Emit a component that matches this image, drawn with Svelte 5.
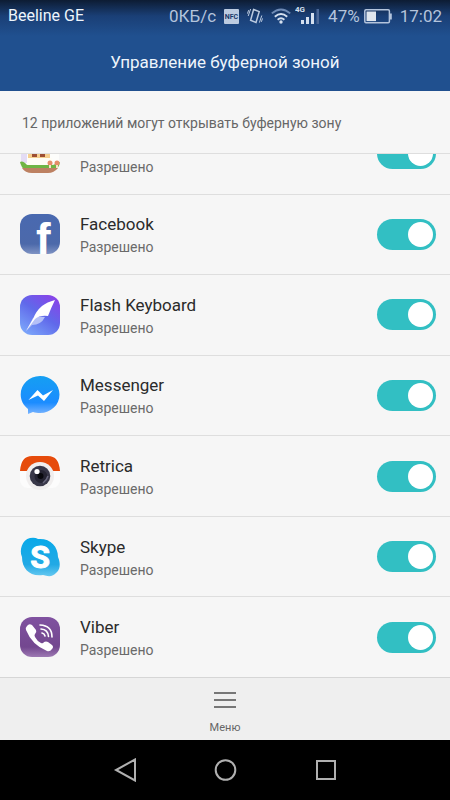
<script>
  let apps = $state([
    { id: 'farm', name: '', allowed: true },
    { id: 'facebook', name: 'Facebook', allowed: true },
    { id: 'flash', name: 'Flash Keyboard', allowed: true },
    { id: 'messenger', name: 'Messenger', allowed: true },
    { id: 'retrica', name: 'Retrica', allowed: true },
    { id: 'skype', name: 'Skype', allowed: true },
    { id: 'viber', name: 'Viber', allowed: true }
  ]);
</script>

<div class="screen">
  <header>
    <div class="status">
      <span class="carrier">Beeline GE</span>
      <span class="speed">0КБ/с</span>
      <svg class="nfc" width="15" height="15" viewBox="0 0 15 15">
        <rect width="15" height="15" rx="1" fill="#bccbe0" />
        <text x="7.5" y="10" text-anchor="middle" font-size="7" font-weight="700" fill="#1b3a6b">NFC</text>
      </svg>
      <svg class="vibrate" width="16" height="16" viewBox="0 0 16 16" fill="none" stroke="#bccbe0">
        <path d="M6.6 1.5 12.2 3.6 9 14.5 3.6 12.3Z" stroke-width="1.5" />
        <path d="M3.6 1 1.2 8M1.6 2.2.5 5.6M14.8 7.5 12.4 14.6M15.5 10.4 14.4 13.8" stroke-width="1" />
      </svg>
      <svg class="wifi" width="20" height="16" viewBox="0 0 20 16" fill="none" stroke-width="1.9">
        <path d="M.8 5.4Q10-2.6 19.2 5.4" stroke="#6f8bb5" />
        <path d="M3.8 8.7Q10 3.4 16.2 8.7" stroke="#d5e0ef" />
        <path d="M6.6 11.7Q10 9 13.4 11.7" stroke="#d5e0ef" />
        <circle cx="10" cy="14" r="1.7" fill="#d5e0ef" />
      </svg>
      <svg class="signal" width="25" height="19" viewBox="0 0 25 19" fill="#d5e0ef">
        <text x="0" y="7" font-size="8" font-weight="700">4G</text>
        <path d="M6 15h3v4H6zM11 12h3v7h-3zM16 8h3v11h-3z" />
        <path d="M21.5 4H24v15h-2.5z" fill="#4a6797" />
      </svg>
      <span class="percent">47%</span>
      <svg class="battery" width="28" height="15" viewBox="0 0 28 15">
        <rect x=".8" y=".8" width="24.6" height="13" rx="1.2" fill="none" stroke="#b4c4dc" stroke-width="1.5" />
        <rect x="2.5" y="2.5" width="9.5" height="9.6" fill="#dfe6ee" />
        <path d="M26 4.5h1.8v6H26z" fill="#b4c4dc" />
      </svg>
      <time>17:02</time>
    </div>
    <h1>Управление буферной зоной</h1>
  </header>

  <p class="notice">12 приложений могут открывать буферную зону</p>

  <main>
    <ul>
      {#each apps as app (app.id)}
        <li>
          <svg class="icon" width="40" height="40" viewBox="0 0 40 40" aria-hidden="true">
            {#if app.id === 'farm'}
              <path d="M1 12Q20 6 39 12V30H1Z" fill="#fdfdfb" />
              <path d="M1 16h6v13H1z" fill="#e4dcf5" />
              <path d="M9 16h20v4H9z" fill="#e0a76c" />
              <path d="M8 19h22v5H8z" fill="#f6cf8f" />
              <path d="M12 19h5v4h-5zM20 19h5v4h-5z" fill="#9d4f35" />
              <path d="M8 24h24v8H8z" fill="#fffdf4" />
              <path d="M0 28Q3 26 7 31H33L40 28Q39 34 35 36H5Q1 33 0 28Z" fill="#6fb544" />
              <path d="M2 34H38Q34 39 28 39H12Q5 39 2 34Z" fill="#bd8162" />
              <circle cx="30" cy="29" r="2.5" fill="#e58d69" />
              <circle cx="37" cy="29" r="2.5" fill="#e58d69" />
              <path d="M29 31h2v3h-2zM36 31h2v3h-2z" fill="#f6e2c5" />
            {:else if app.id === 'facebook'}
              <defs>
                <linearGradient id="fb" x2="0" y2="1">
                  <stop stop-color="#4969b0" />
                  <stop offset=".75" stop-color="#4c69aa" />
                  <stop offset="1" stop-color="#7f93c3" />
                </linearGradient>
              </defs>
              <rect width="40" height="40" rx="12" fill="url(#fb)" />
              <text class="f" x="16" y="40">f</text>
            {:else if app.id === 'flash'}
              <defs>
                <linearGradient id="flash" x1=".9" y1="0" x2=".2" y2="1">
                  <stop stop-color="#8c3fe8" />
                  <stop offset=".5" stop-color="#6069ea" />
                  <stop offset="1" stop-color="#7ba5fa" />
                </linearGradient>
              </defs>
              <rect width="40" height="40" rx="12" fill="url(#flash)" />
              <path d="M13 23Q19 21 25 22Q21 30 12 30L6 36Z" fill="#b5c0f7" />
              <path d="M35 5Q27 7 22 11Q16 16 13 24L6 36L15 24Q20 20 28 21Q31 13 35 5Z" fill="#fff" />
            {:else if app.id === 'messenger'}
              <defs>
                <linearGradient id="msg" x2="0" y2="1">
                  <stop stop-color="#159ff2" />
                  <stop offset=".7" stop-color="#1b8cff" />
                  <stop offset="1" stop-color="#79b4ff" />
                </linearGradient>
              </defs>
              <path d="M20 1C9 1 .7 9.3.7 19.5C.7 25.5 3.500 30.5 8 34V39L13 37C15.2 37.8 17.5 38 20 38C31 38 39.5 29.8 39.5 19.500S31 1 20 1Z" fill="url(#msg)" />
              <path d="M8.5 25 17.5 15 23 20.5 33 15 24 26 18 20.5Z" fill="#fff" />
            {:else if app.id === 'retrica'}
              <rect width="40" height="32" rx="8" fill="#fcfcfc" />
              <path d="M0 15Q1 0 12 0H28Q39 0 40 15Z" fill="#e64b0b" />
              <circle cx="20" cy="20" r="14" fill="#f0eeee" />
              <circle cx="20" cy="20" r="10.3" fill="#383748" />
              <circle cx="21" cy="20.5" r="6.5" fill="#252432" />
              <circle cx="20.5" cy="20" r="3" fill="#08080d" />
              <path d="M23 27Q27 24 28 20" fill="none" stroke="#68677d" stroke-width="1.5" />
              <circle cx="17" cy="15.5" r="2.6" fill="#fff" />
            {:else if app.id === 'skype'}
              <defs>
                <linearGradient id="sky" x2="0" y2="1">
                  <stop stop-color="#08a9e9" />
                  <stop offset=".7" stop-color="#22a9e5" />
                  <stop offset="1" stop-color="#65c8f0" />
                </linearGradient>
              </defs>
              <path d="M10 1Q15 0 18 2C30 1 38 9 38 20C41 27 40 33 36 36Q32 41 23 38C10 40 2 32 2 20C-1 13 2 3 10 1Z" fill="url(#sky)" />
              <text class="s" x="20" y="31" text-anchor="middle">S</text>
            {:else}
              <defs>
                <linearGradient id="vib" x2="0" y2="1">
                  <stop stop-color="#8052a0" />
                  <stop offset=".75" stop-color="#73478f" />
                  <stop offset="1" stop-color="#9d79b3" />
                </linearGradient>
              </defs>
              <rect width="40" height="40" rx="12" fill="url(#vib)" />
              <path d="M7 9Q9 6 12 8L16 13Q17 15 15 17Q14 18 15 20Q17 24 21 26Q23 27 24 25Q26 24 28 25L32 28Q34 30 32 32Q30 35 27 34Q12 28 6 13Q5 11 7 9Z" fill="#fff" />
              <path d="M20 8Q32 8.500 32 20M21 12Q28 12.500 28.500 19.500M22 16Q24.500 16.500 25 19" fill="none" stroke="#fff" stroke-width="1.6" stroke-linecap="round" />
            {/if}
          </svg>
          <label for={app.id}>
            <span class="name">{app.name}</span>
            <span class="state">Разрешено</span>
          </label>
          <input type="checkbox" role="switch" id={app.id} bind:checked={app.allowed} />
        </li>
      {/each}
    </ul>
  </main>

  <button class="menu" type="button">
    <svg width="22" height="16" viewBox="0 0 22 16" stroke="#777" stroke-width="1.8">
      <path d="M0 1h22M0 8h22M0 15h22" />
    </svg>
    Меню
  </button>

  <nav>
    <button type="button" aria-label="Назад">
      <svg width="24" height="24" viewBox="0 0 24 24"><path d="M22 1.500v21L3 12Z" /></svg>
    </button>
    <button type="button" aria-label="Домой">
      <svg width="24" height="24" viewBox="0 0 24 24"><circle cx="12.5" cy="12" r="9.8" /></svg>
    </button>
    <button type="button" aria-label="Недавние">
      <svg width="24" height="24" viewBox="0 0 24 24"><rect x="4" y="3" width="18" height="18" /></svg>
    </button>
  </nav>
</div>

<style>
  :global(body) {
    margin: 0;
    background: #000;
  }
  .screen {
    display: flex;
    flex-direction: column;
    min-height: 100vh;
    background: #f6f6f6;
    font-family: Roboto, 'Liberation Sans', sans-serif;
    color: #2b2b2b;
  }
  header {
    background: linear-gradient(#0d1c33, #1a3f76 16px, #20508f 36px);
    color: #eef5fc;
  }
  .status {
    display: flex;
    align-items: center;
    height: 32px;
    padding: 0 8px;
    font-size: 17px;
    line-height: 32px;
  }
  .carrier {
    font-size: 16px;
  }
  .speed,
  .percent,
  time {
    color: #b4c4dc;
  }
  .speed {
    margin-left: auto;
  }
  .nfc,
  .vibrate,
  .wifi,
  .percent,
  time {
    margin-left: 8px;
  }
  .signal {
    margin: 0 0 4px 4px;
  }
  .battery {
    margin-left: 4px;
  }
  h1 {
    margin: 0;
    padding: 16px 16px 15px;
    font-size: 17px;
    font-weight: 400;
    line-height: 28px;
    text-align: center;
  }
  .notice {
    margin: 0;
    padding: 21px 22px 19px;
    border-bottom: 1px solid #dedede;
    font-size: 14px;
    line-height: 22px;
    color: #666;
  }
  main {
    display: flex;
    flex: 1;
    overflow: hidden;
  }
  /* the list is scrolled half a row past its first app */
  ul {
    display: grid;
    flex: 1;
    grid-auto-rows: 1fr;
    margin: -40px 0 -1px;
    padding: 0;
    list-style: none;
  }
  li {
    display: flex;
    align-items: center;
    gap: 20px;
    min-height: 72px;
    padding: 0 14px 0 20px;
    border-bottom: 1px solid #dedede;
    box-sizing: border-box;
  }
  .icon {
    flex: none;
    overflow: visible;
  }
  .f {
    font: 700 44px 'Liberation Sans', sans-serif;
    fill: #fff;
  }
  .s {
    font: 700 32px Roboto, sans-serif;
    fill: #fff;
    stroke: #fff;
    stroke-linejoin: round;
  }
  label {
    display: flex;
    flex: 1;
    flex-direction: column;
    padding-top: 2px;
  }
  .name {
    min-height: 24px;
    font-size: 17px;
    line-height: 24px;
  }
  .state {
    font-size: 14px;
    line-height: 22px;
    color: #6a6a6a;
  }
  input {
    display: flex;
    align-items: center;
    width: 59px;
    height: 31px;
    margin: 0;
    padding: 3px;
    box-sizing: border-box;
    border-radius: 16px;
    appearance: none;
    background: #bbb;
  }
  input::before {
    content: '';
    width: 25px;
    height: 25px;
    border-radius: 50%;
    background: #fff;
  }
  input:checked {
    justify-content: flex-end;
    background: #32bfc3;
  }
  button {
    border: 0;
    font-family: inherit;
  }
  .menu {
    display: flex;
    flex-direction: column;
    align-items: center;
    gap: 12px;
    padding: 14px 0 4px;
    border-top: 1px solid #d6d6d6;
    background: #efefef;
    font-size: 11px;
    line-height: 16px;
    color: #666;
  }
  nav {
    display: flex;
    justify-content: center;
    gap: 76px;
    height: 60px;
    background: #000;
  }
  nav button {
    display: flex;
    align-items: center;
    padding: 0;
    background: none;
  }
  nav svg {
    fill: none;
    stroke: #b0b0b0;
    stroke-width: 2;
  }
</style>
